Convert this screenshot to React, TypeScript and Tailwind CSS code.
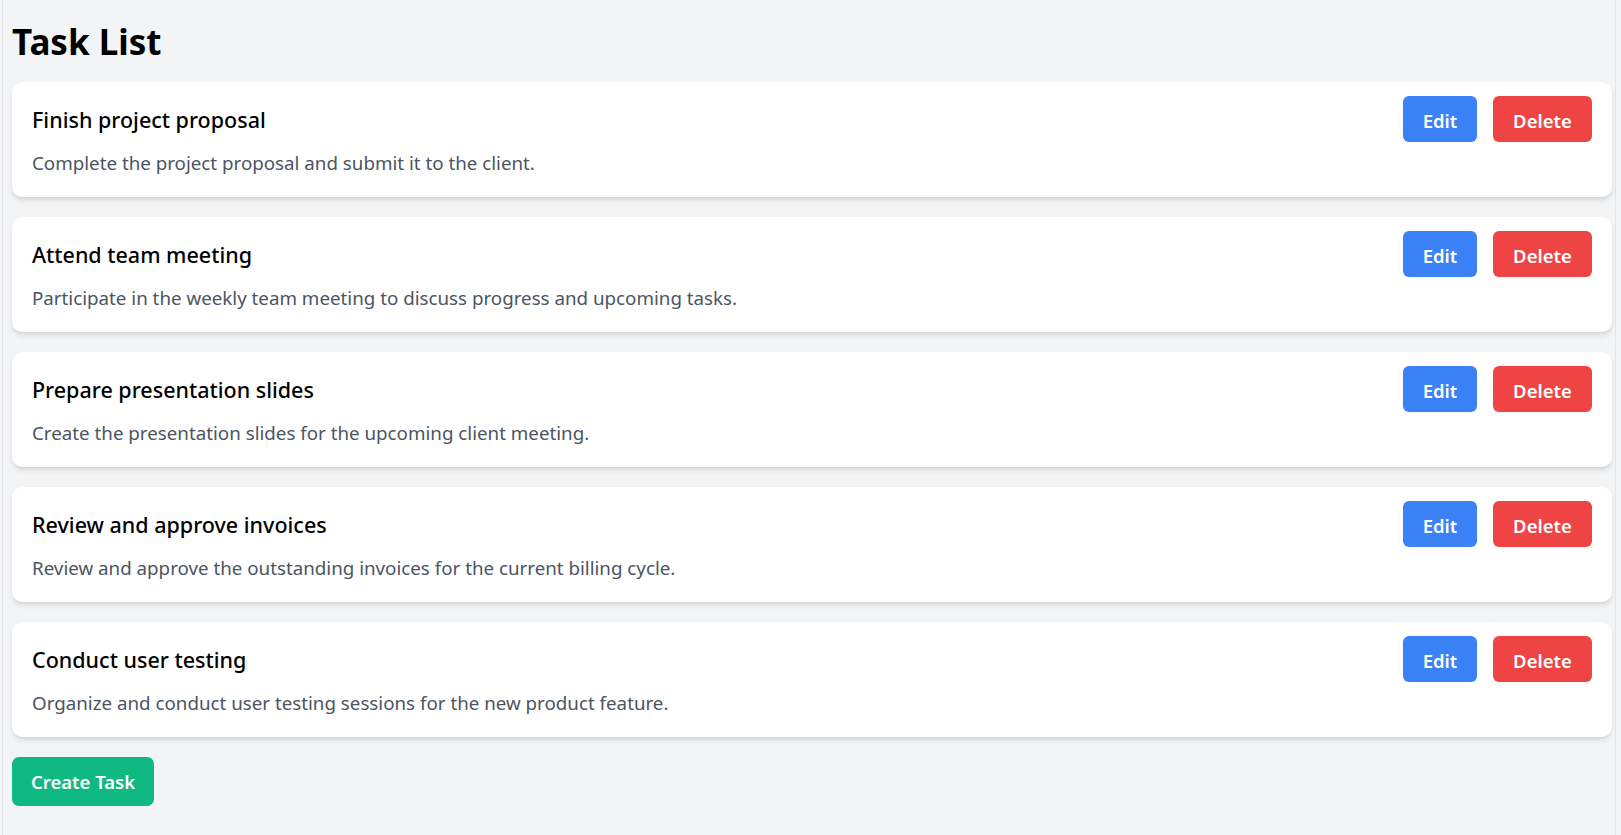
import React from 'react';

const tasks = [
  {
    title: 'Finish project proposal',
    description: 'Complete the project proposal and submit it to the client.',
  },
  {
    title: 'Attend team meeting',
    description: 'Participate in the weekly team meeting to discuss progress and upcoming tasks.',
  },
  {
    title: 'Prepare presentation slides',
    description: 'Create the presentation slides for the upcoming client meeting.',
  },
  {
    title: 'Review and approve invoices',
    description: 'Review and approve the outstanding invoices for the current billing cycle.',
  },
  {
    title: 'Conduct user testing',
    description: 'Organize and conduct user testing sessions for the new product feature.',
  },
];

export default function App() {
  return (
    <div className="min-h-screen bg-[#f3f4f6] font-['Noto_Sans',sans-serif]">
      <div className="ml-[2px] mr-[5px] min-h-screen border-x border-[#e3e5e8] pl-[9px] pr-[3px] pt-[20px] pb-[28px]">
        <h1 className="text-[35px] leading-[44px] font-bold text-black">Task List</h1>

        <div className="mt-[18px] flex flex-col gap-[20px]">
          {tasks.map((task, i) => (
            <div key={i} className="h-[115px] rounded-[10px] bg-white px-[20px] pt-[14px] shadow-md">
              <div className="flex h-[46px] items-center justify-between">
                <h2 className="pt-[3px] text-[21.5px] font-medium text-black">{task.title}</h2>
                <div className="flex gap-[16px]">
                  <button className="h-[46px] w-[74px] rounded-[6px] bg-[#3b82f6] pt-[3px] text-[18.5px] font-semibold text-white">
                    Edit
                  </button>
                  <button className="h-[46px] w-[99px] rounded-[6px] bg-[#ef4444] pt-[3px] text-[18.5px] font-semibold text-white">
                    Delete
                  </button>
                </div>
              </div>
              <p className="mt-[7px] text-[18.75px] leading-[28px] text-[#4b5563]">{task.description}</p>
            </div>
          ))}
        </div>

        <button className="mt-[20px] h-[49px] w-[142px] rounded-[7px] bg-[#10b981] text-[18.5px] font-semibold text-white">
          Create Task
        </button>
      </div>
    </div>
  );
}
